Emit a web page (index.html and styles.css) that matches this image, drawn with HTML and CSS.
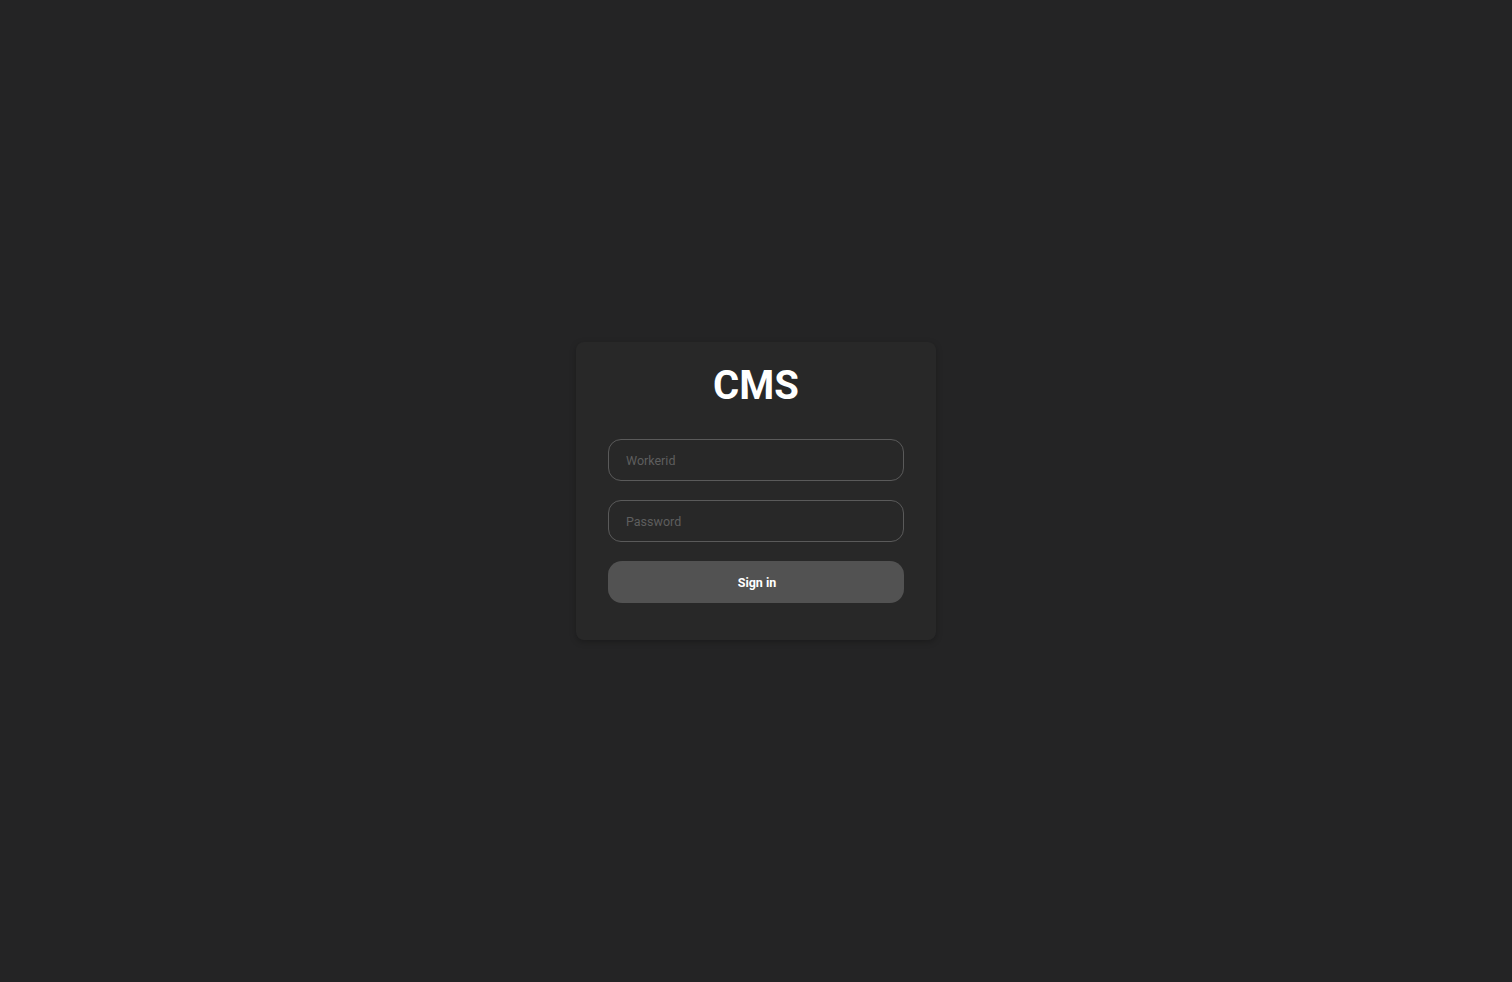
FILE: index.html
```html
<!DOCTYPE html>
<html lang="en">
<head>
<meta charset="utf-8">
<title>CMS</title>
<link rel="stylesheet" href="styles.css">
</head>
<body>
<main class="page">
  <form class="card">
    <h1 class="title">CMS</h1>
    <input class="field" type="text" placeholder="Workerid">
    <input class="field" type="password" placeholder="Password">
    <button class="btn" type="button">Sign in</button>
  </form>
</main>
</body>
</html>
```
FILE: styles.css
```css
html, body {
  margin: 0;
  padding: 0;
  height: 100%;
}
body {
  background: #242425;
  font-family: Roboto, "Liberation Sans", sans-serif;
}
.page {
  height: 100%;
  display: flex;
  align-items: center;
  justify-content: center;
}
.card {
  width: 360px;
  box-sizing: border-box;
  padding: 20px 32px 37px;
  background: #282828;
  border-radius: 8px;
  box-shadow: 0 2px 6px rgba(0, 0, 0, 0.25);
  display: flex;
  flex-direction: column;
  gap: 19px;
}
.title {
  margin: 0 0 10px;
  font-size: 40px;
  line-height: 48px;
  font-weight: 700;
  color: #ffffff;
  text-align: center;
}
.field {
  height: 42px;
  box-sizing: border-box;
  padding: 0 17px;
  border: 1px solid #5a5a5a;
  border-radius: 13px;
  background: transparent;
  color: #e0e0e0;
  font-family: Roboto, "Liberation Sans", sans-serif;
  font-size: 12.5px;
  outline: none;
}
.field::placeholder {
  color: #5e5e5e;
}
.btn {
  height: 42px;
  padding: 0 0 0 2px;
  border: none;
  border-radius: 14px;
  background: #525252;
  color: #ffffff;
  font-family: Roboto, "Liberation Sans", sans-serif;
  font-size: 12.5px;
  font-weight: 700;
  cursor: pointer;
}
```
